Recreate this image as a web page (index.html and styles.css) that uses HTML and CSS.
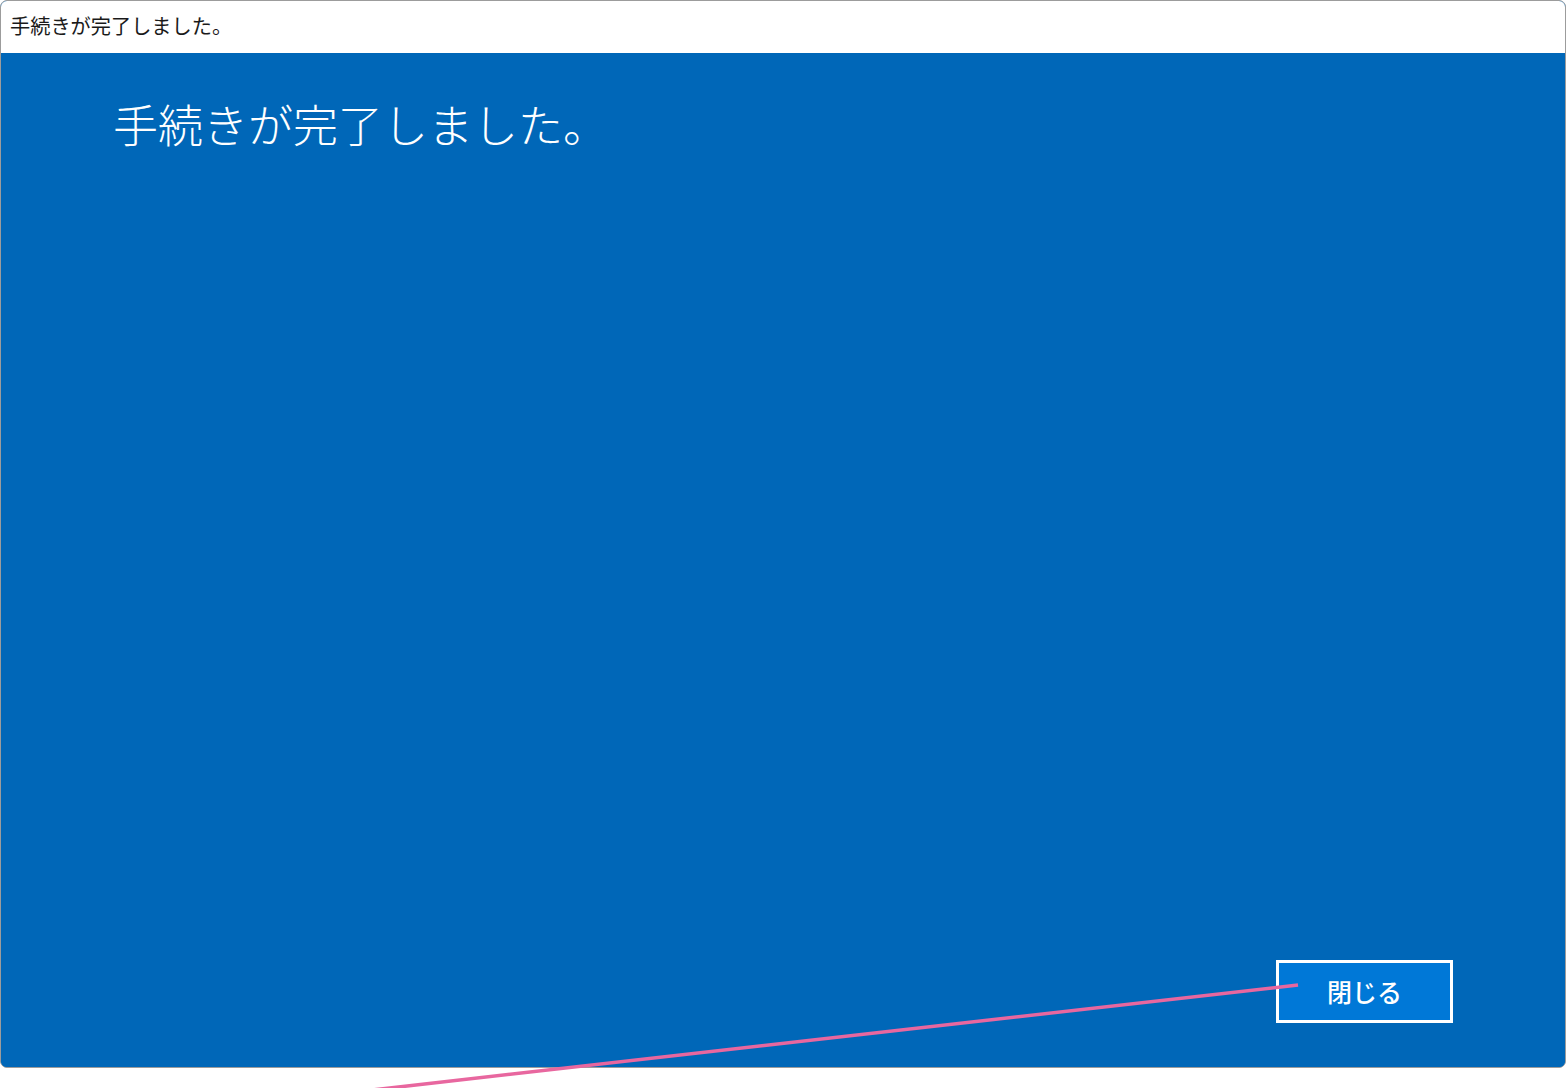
FILE: index.html
```html
<!DOCTYPE html>
<html lang="ja">
<head>
<meta charset="utf-8">
<title>手続きが完了しました。</title>
<link rel="stylesheet" href="styles.css">
</head>
<body>
<div class="window">
  <div class="titlebar">手続きが完了しました。</div>
  <div class="content">
    <h1 class="heading">手続きが完了しました。</h1>
    <div class="footer">
      <button class="btn">閉じる</button>
    </div>
  </div>
</div>
<svg class="annotation" width="1566" height="1088" viewBox="0 0 1566 1088">
  <line x1="1298" y1="985" x2="372" y2="1090" stroke="#e8679f" stroke-width="3.5"/>
</svg>
</body>
</html>
```

FILE: styles.css
```css
html, body {
  margin: 0;
  padding: 0;
  background: #ffffff;
  width: 1566px;
  height: 1088px;
  overflow: hidden;
}
body {
  position: relative;
  font-family: "Noto Sans CJK JP", "Noto Sans", sans-serif;
}
.window {
  box-sizing: border-box;
  width: 1566px;
  height: 1068px;
  border: 1px solid #9c9c9c;
  border-radius: 7px;
  overflow: hidden;
  display: flex;
  flex-direction: column;
  background: #0067b8;
}
.titlebar {
  height: 52px;
  flex: 0 0 52px;
  background: #ffffff;
  color: #1a1a1a;
  font-size: 20.2px;
  line-height: 50px;
  padding-left: 9px;
  box-sizing: border-box;
  white-space: nowrap;
}
.content {
  flex: 1;
  display: flex;
  flex-direction: column;
  background: #0067b8;
}
.heading {
  margin: 0;
  padding: 38px 0 0 112px;
  font-size: 45px;
  font-weight: 300;
  line-height: 66px;
  color: #ffffff;
  white-space: nowrap;
}
.footer {
  margin-top: auto;
  display: flex;
  justify-content: flex-end;
  padding: 0 112px 44px 0;
}
.btn {
  box-sizing: border-box;
  width: 177px;
  height: 63px;
  border: 3px solid #ffffff;
  background: #0078d7;
  color: #ffffff;
  font-family: "Noto Sans CJK JP", "Noto Sans", sans-serif;
  font-size: 25px;
  font-weight: 500;
  padding: 0;
  padding-bottom: 2px;
}
.annotation {
  position: absolute;
  left: 0;
  top: 0;
  pointer-events: none;
}
```
